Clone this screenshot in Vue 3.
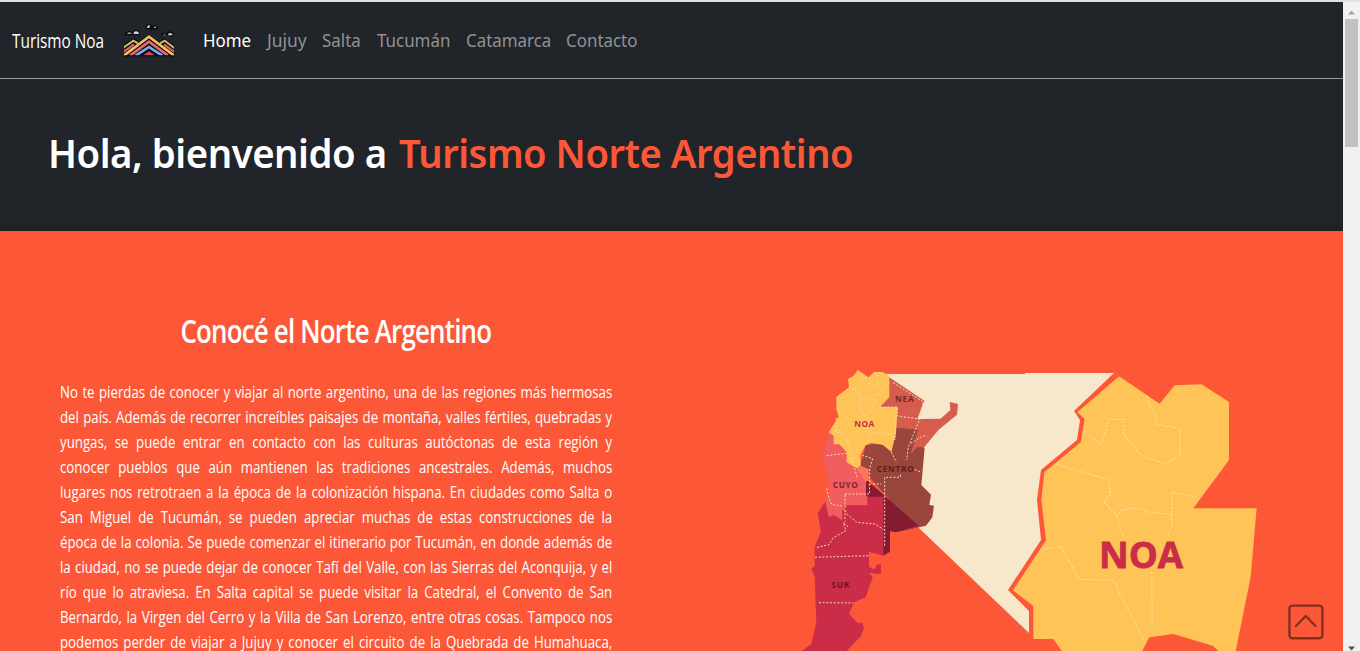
<script setup>
const links = ['Home', 'Jujuy', 'Salta', 'Tucumán', 'Catamarca', 'Contacto']
const lines = [
  'No te pierdas de conocer y viajar al norte argentino, una de las regiones más hermosas',
  'del país. Además de recorrer increíbles paisajes de montaña, valles fértiles, quebradas y',
  'yungas, se puede entrar en contacto con las culturas autóctonas de esta región y',
  'conocer pueblos que aún mantienen las tradiciones ancestrales. Además, muchos',
  'lugares nos retrotraen a la época de la colonización hispana. En ciudades como Salta o',
  'San Miguel de Tucumán, se pueden apreciar muchas de estas construcciones de la',
  'época de la colonia. Se puede comenzar el itinerario por Tucumán, en donde además de',
  'la ciudad, no se puede dejar de conocer Tafí del Valle, con las Sierras del Aconquija, y el',
  'río que lo atraviesa. En Salta capital se puede visitar la Catedral, el Convento de San',
  'Bernardo, la Virgen del Cerro y la Villa de San Lorenzo, entre otras cosas. Tampoco nos',
  'podemos perder de viajar a Jujuy y conocer el circuito de la Quebrada de Humahuaca,',
]
</script>

<template>
  <div class="window">
    <div class="page">
      <header class="nav">
        <div class="brand"><span>Turismo Noa</span></div>
        <svg class="logo" viewBox="42 24 150 102" width="50" height="34">
          <rect x="42" y="120" width="150" height="4" fill="#0c0c0e" />
          <g fill="none" stroke="#0c0c0e" stroke-width="15">
            <path d="M42 97 72 78 100 101M134 101 162 78 192 98M44 121 117 67 190 121" />
          </g>
          <clipPath id="base"><rect x="42" y="50" width="150" height="71" /></clipPath>
          <path d="M42 122 117 68 192 122Z" fill="#0c0c0e" />
          <g fill="none" stroke-width="6" clip-path="url(#base)">
            <path d="M40 98 70 77 84 85M150 85 164 77 194 100" stroke="#c9b874" />
            <path d="M40 111 72 88M162 88 194 112" stroke="#e4626c" />
            <path d="M40 122 70 99M164 99 194 123" stroke="#e8b354" />
            <path d="M42 122 117 65 192 122" stroke="#f3c159" stroke-width="7.500" />
            <path d="M60 122 117 80 174 122" stroke="#e96770" stroke-width="8" />
            <path d="M77 122 117 96 157 122" stroke="#76aeea" stroke-width="8" />
            <path d="M97 122 117 109 137 122Z" fill="#c94c59" stroke="none" />
          </g>
          <g fill="#0c0c0e">
            <path d="M42 58 50 50 60 47 69 52 75 45 85 46 90 56 87 61H43Z" />
            <path d="M106 40 110 29 120 26 127 33 133 30 143 36 147 41 142 44H110Z" />
            <path d="M151 61 158 53 168 56 176 48 188 52 190 63 183 66 174 61Z" />
          </g>
          <g fill="#cfd5e0">
            <path d="M51 56q6-7 15 0ZM71 57q0-9 8-8 8 1 8 8ZM111 39q1-9 9-9l-2 9ZM159 61q3-5 9 0ZM174 61q1-8 7-7 7 1 6 7ZM130 38l7-4v5Z" />
          </g>
        </svg>
        <nav class="links">
          <a v-for="(l, i) in links" :key="l" :class="['link', 'l' + i]">{{ l }}</a>
        </nav>
      </header>
      <section class="hero">
        <h1><span class="hi">Hola, bienvenido a</span> <span class="accent">Turismo Norte Argentino</span></h1>
      </section>
      <main class="content">
        <article class="copy">
          <h2><span>Conocé el Norte Argentino</span></h2>
          <div class="text">
            <p v-for="l in lines" :key="l">{{ l }}</p>
          </div>
        </article>
        <svg class="map" viewBox="790 360 480 291" width="480" height="291">
          <path fill="#f7e8cc" d="M885 374 1025 374 1025 373 1114 373 1074 411 1080 420 1077 440 1041 470 1037 500 1041 540 1008 590 1029 611V633L900 510V440Z" />
          <g transform="translate(780 350) scale(.33333)">
            <path fill="#d65c4e" d="M328 82 433 152 412 207 482 206 511 180 509 156 534 162 531 194 476 239 430 295 392 315 345 270 300 170Z" />
            <path fill="#9a463c" d="M350 233 414 239 392 312 412 291 434 293 424 405 453 434 448 465 462 467 457 502 438 527 350 547 330 541V450L240 350 258 285 310 280 334 305Z" />
            <path fill="#851b31" d="M258 388 416 527 347 547 330 543V605L310 617 258 560Z" />
            <path fill="#cb2c48" d="M113 490 145 440 310 440V617L267 605V650L283 659 290 645 303 641V671H286L267 668 278 681 257 742 223 757 207 791 232 818H247L252 834 243 858 200 903H65L94 882 109 817 104 680 94 655 104 648V591L123 544Z" />
            <path fill="#f15d5e" d="M146 247 161 257V281H178L200 307V339L231 355 258 385V437H262V466H205L187 471V511L160 495 147 502 135 451 147 430V390L127 325Z" />
            <path fill="#f97858" d="M242 347 266 358V389L258 396 231 356Z" />
            <path fill="#ffc458" d="M233 60 266 82 282 66H308L328 78V142L300 171H353L348 248 334 306 309 285 275 279 257 285 241 316 242 347 231 355 200 337V307L178 283H161V257L146 247 176 200 169 177V140L207 112 204 87 221 77Z" />
            <path fill="none" stroke="#f4d8b1" stroke-width="3" stroke-dasharray="6 5" d="M207 112 230 122 241 148 238 172 253 199 273 185 287 150 240 150M240 94 250 80 269 101 292 108V77L269 85M328 96 302 134H283M176 183 190 183 207 210M170 204 168 247 190 251 208 286V310L222 348 232 385M140 317 200 310M246 316 278 326 269 355V402H304M258 284 275 252 300 246 331 255 345 270 348 198M340 98 429 155 421 204 385 291 380 330M300 171H352V198L425 208M334 306 349 337M420 365 402 358M362 374 360 382H314V435 587M195 432H269L268 402M392 280 430 257 442 260M140 415 147 445 155 464 183 467 204 495 230 517 285 522 310 538M204 530 190 518 198 542 160 563 147 584 108 593M195 435V515M105 622 267 617M117 758 220 759" />
            <g class="small-labels" text-anchor="middle">
              <text x="373" y="157" textLength="56" fill="#78262b">NEA</text>
              <text x="253" y="231" textLength="60" fill="#c92b48">NOA</text>
              <text x="346" y="366" textLength="111" fill="#651c1b">CENTRO</text>
              <text x="196" y="415" textLength="75" fill="#7f2430">CUYO</text>
              <text x="181" y="714" textLength="54" fill="#701322">SUR</text>
            </g>
          </g>
          <g transform="translate(980 350) scale(.33333)">
            <path fill="#ffc458" d="M417 79 539 161 584 106 665 103 747 156V330L640 475H830L812 680 767 904H716L698 887 580 852 508 862 486 904H246L220 867H160V768L99 721 198 571 184 450 193 367 302 277 314 207 292 187Z" />
            <path fill="none" stroke="#ffe09a" stroke-width="3.4" stroke-dasharray="6 5" d="M310 243 364 283 385 208H432V255L487 319 558 341 601 314 599 235 530 223 524 190 508 165 502 138M229 343 386 389 393 433 370 453 411 499 423 480 474 473 509 487 575 493V427L648 440M575 493V530L562 556M411 499 428 556M190 597 242 590 298 688 400 690 429 750 493 872M515 666 517 830" />
          </g>
          <text x="1099" y="568" class="big-label" textLength="84" lengthAdjust="spacingAndGlyphs">NOA</text>
        </svg>
        <button class="to-top" aria-label="Subir">
          <svg width="36" height="36" viewBox="0 0 36 36" fill="none" stroke="#84301f" stroke-width="2.4" stroke-linecap="round" stroke-linejoin="round">
            <rect x="1.4" y="1.6" width="33" height="32.6" rx="3" /><path d="M8 22 17.700 12 27.500 22" />
          </svg>
        </button>
      </main>
    </div>
    <aside class="scrollbar">
      <svg width="17" height="17"><path d="M5 12.500H12L8.500 8.500Z" fill="#a3a3a3" /></svg>
      <div class="thumb"></div>
      <svg class="down" width="17" height="6"><path d="M5 1.500H12L8.500 5.500Z" fill="#505050" /></svg>
    </aside>
  </div>
</template>

<style>
body { overflow: hidden; }
</style>

<style scoped>
.window { display: flex; width: 1360px; height: 651px; box-sizing: border-box; border-top: 2px solid #dee1e6; overflow: hidden; background: #f1f1f1; }
.page { width: 1343px; height: 649px; display: flex; flex-direction: column; overflow: hidden; background: #212529; }
.nav { box-sizing: border-box; height: 77px; flex: none; border-bottom: 1px solid #9b9b96; display: flex; align-items: center; padding-left: 12px; }
.brand { width: 112px; color: #fff; font: 20px/30px "Open Sans", sans-serif; white-space: nowrap; padding-top: 1px; }
.brand span { display: inline-block; transform: scaleX(.768); transform-origin: left; }
.logo { flex: none; }
.links { display: flex; margin-left: 29px; color: #909294; font: 18px/27px "Noto Sans", sans-serif; white-space: nowrap; }
.link { display: block; transform: scaleX(.94); transform-origin: left; }
.l0 { color: #fff; width: 64px; }
.l1 { width: 55px; transform: scaleX(.97); }
.l2 { width: 55px; }
.l3 { width: 89px; }
.l4 { width: 100px; }
.hero { height: 152px; flex: none; box-sizing: border-box; padding: 50px 0 0 48px; background: linear-gradient(#212529 138px, #1d2022); }
h1 { margin: 0; color: #fff; font: 600 40px/48px "Noto Sans", sans-serif; white-space: nowrap; display: flex; }
.hi, .accent { letter-spacing: -.5px; transform: scaleX(.959); transform-origin: left; }
.hi { width: 351px; }
.accent { color: #fc5838; transform: scaleX(.954); }
.content { flex: 1; min-height: 0; display: flex; background: #fc5838; position: relative; overflow: hidden; }
.copy { width: 552px; margin-left: 60px; flex: none; color: #fff; }
h2 { margin: 80px 0 0; height: 40px; font: 600 32px/40px "Open Sans", sans-serif; text-align: center; white-space: nowrap; letter-spacing: -1px; display: flex; justify-content: center; }
h2 span { transform: scaleX(.81); }
.text { width: 708px; margin-top: 28px; transform: scaleX(.78); transform-origin: left top; font: 17px/25px "Open Sans", sans-serif; }
.text p { margin: 0; height: 25px; text-align: justify; text-align-last: justify; white-space: nowrap; }
.map { margin: 129px 0 0 178px; flex: none; }
.small-labels { font: 700 25px "Open Sans", sans-serif; }
.big-label { font: 700 35px "Open Sans", sans-serif; fill: #cb2c48; stroke: #cb2c48; stroke-width: .8px; }
.to-top { position: absolute; right: 19px; bottom: 11px; width: 36px; height: 36px; padding: 0; border: 0; background: none; }
.to-top svg { display: block; }
.scrollbar { width: 17px; height: 649px; background: #f1f1f1; display: flex; flex-direction: column; align-items: center; }
.thumb { width: 13px; height: 128px; background: #c1c1c1; }
.down { margin-top: auto; }
</style>
